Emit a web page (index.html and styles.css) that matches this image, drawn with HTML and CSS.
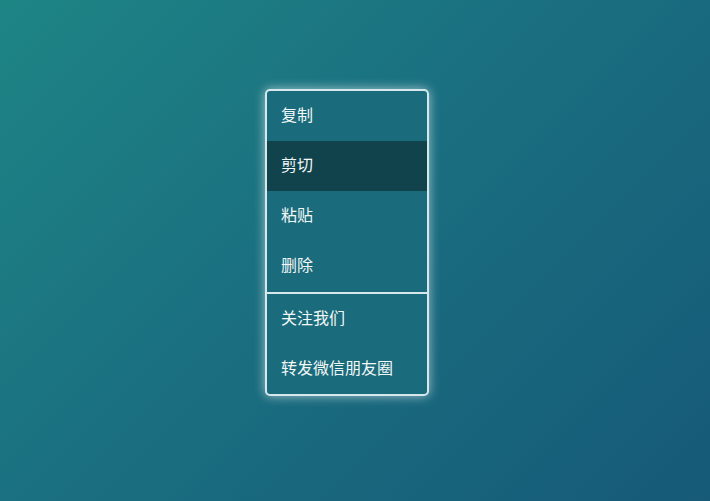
FILE: index.html
```html
<!DOCTYPE html>
<html lang="zh">
<head>
<meta charset="utf-8">
<link rel="stylesheet" href="styles.css">
</head>
<body>
<div class="stage">
  <ul class="menu">
    <li class="item">复制</li>
    <li class="item active">剪切</li>
    <li class="item">粘贴</li>
    <li class="item">删除</li>
    <li class="sep"></li>
    <li class="item">关注我们</li>
    <li class="item">转发微信朋友圈</li>
  </ul>
</div>
</body>
</html>
```
FILE: styles.css
```css
html, body {
  margin: 0;
  padding: 0;
  height: 100%;
}
body {
  background: linear-gradient(135deg, #1e8585 0%, #1a6f80 45%, #165a78 100%);
  font-family: "Noto Sans CJK SC", "Noto Sans", sans-serif;
}
.stage {
  display: flex;
  justify-content: flex-start;
  padding-top: 89px;
  padding-left: 265px;
}
.menu {
  list-style: none;
  margin: 0;
  padding: 0;
  width: 160px;
  border: 2px solid #d6e8ec;
  border-radius: 5px;
  background: #1a6b7b;
  box-shadow: 0 0 11px rgba(255, 255, 255, 0.6);
  overflow: hidden;
}
.item {
  height: 50px;
  line-height: 47px;
  padding-left: 14px;
  color: #f2f7f7;
  font-size: 16px;
}
.item.active {
  background: #11434d;
}
.sep {
  height: 2px;
  margin-top: 1px;
  background: #d6e8ec;
}
```
